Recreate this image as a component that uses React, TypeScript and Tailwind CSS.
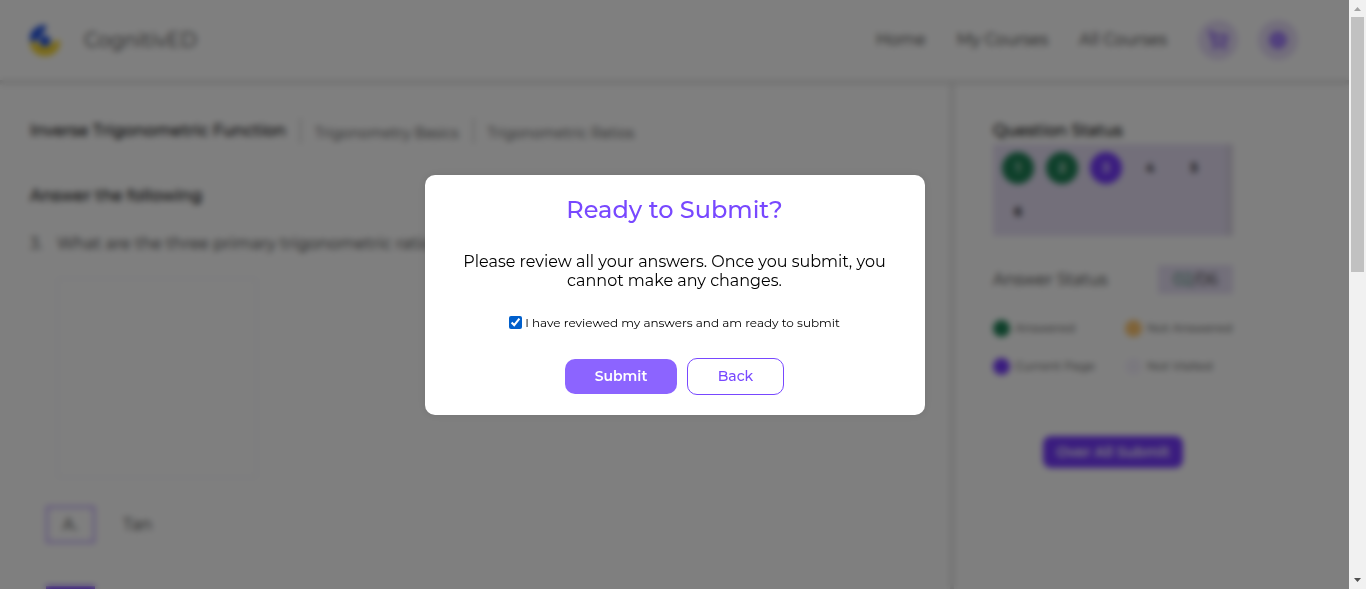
import React, { useState } from "react";
import { ShoppingCart, CircleUserRound } from "lucide-react";

type Status = "answered" | "current" | "unvisited";

const questions: { id: number; status: Status }[] = [
  { id: 1, status: "answered" },
  { id: 2, status: "answered" },
  { id: 3, status: "current" },
  { id: 4, status: "unvisited" },
  { id: 5, status: "unvisited" },
  { id: 6, status: "unvisited" },
];

const questionStyles: Record<Status, string> = {
  answered: "bg-[#1d8055] text-white",
  current: "bg-[#7539ff] text-white",
  unvisited: "text-black",
};

const legend = [
  { label: "Answered", dot: "bg-[#1d8055]" },
  { label: "Not Answered", dot: "bg-[#ffc670]" },
  { label: "Current Page", dot: "bg-[#7539ff]" },
  { label: "Not Visited", dot: "bg-[#f5f1fd]" },
];

function Logo() {
  return (
    <svg viewBox="0 0 32 34" className="h-[34px] w-8" aria-hidden="true">
      <path d="M1 19a15 14 0 0 0 30 0c0-2-5-2-7 0-2 4-5 5-8 5s-6-2-8-5Z" fill="#f5d327" />
      <path d="M1 18C0 9 6 3 15 2c3 0 3 2 1 5l-6 8c-2 3-5 4-9 3Z" fill="#1d4fe0" />
      <circle cx="16" cy="18" r="5.5" fill="#1d4fe0" />
    </svg>
  );
}

function Header() {
  return (
    <header className="flex h-20 shrink-0 items-center justify-between pr-[51px] pl-[29px] shadow-[0_2px_3px_2px_rgba(0,0,0,0.13)]">
      <a href="#home" className="flex items-center gap-[23px] text-xl text-[#444]">
        <Logo />
        CognitivED
      </a>
      <nav className="flex items-center gap-[31px] text-base text-[#333]">
        <a href="#home">Home</a>
        <a href="#my-courses">My Courses</a>
        <a href="#all-courses">All Courses</a>
        <div className="flex gap-5">
          <button aria-label="Cart" className="flex size-10 items-center justify-center rounded-full bg-[#e6dcf8] text-[#8657f5]">
            <ShoppingCart size={20} strokeWidth={3} />
          </button>
          <button aria-label="Profile" className="flex size-10 items-center justify-center rounded-full bg-[#e6dcf8] text-[#8f66f5]">
            <CircleUserRound size={18} strokeWidth={3} fill="#a683ff" />
          </button>
        </div>
      </nav>
    </header>
  );
}

function Question() {
  return (
    <main className="min-w-0 px-[30px] pt-[38px]">
      <div className="flex h-[26px] items-center gap-3.5 text-sm text-[#444]">
        <h1 className="text-base font-medium text-black">Inverse Trigonometric Function</h1>
        <span className="h-full w-px bg-[#aaa]" />
        <a href="#basics" className="pt-1">Trigonometry Basics</a>
        <span className="h-full w-px bg-[#aaa]" />
        <a href="#ratios" className="pt-1">Trigonometric Ratios</a>
      </div>
      <h2 className="mt-10 text-base font-medium text-black">Answer the following</h2>
      <div className="mt-6 flex text-base text-[#333]">
        <span className="w-[27px]">3.</span>
        <p>What are the three primary trigonometric ratios?</p>
      </div>
      <div className="mt-[22px] ml-[27px] size-[200px] border border-[#ececf4]" />
      <div className="mt-7 ml-4 flex items-center gap-7 text-base text-[#333]">
        <button className="flex h-[37px] w-[49px] items-center justify-center border-2 border-[#b494ff]">A.</button>
        <span>Tan</span>
      </div>
      <button aria-label="Option B" className="mt-[43px] ml-4 block h-[37px] w-[49px] bg-[#7539ff]" />
    </main>
  );
}

function StatusPanel() {
  return (
    <aside className="min-w-0 border-l-4 border-[#e2e2e2] pt-9 pl-[39px]">
      <div className="w-60">
        <h2 className="pt-0.5 text-base leading-[26px] font-medium text-black">Question Status</h2>
        <div className="flex bg-[#e6dff5]">
          <div className="flex flex-1 flex-wrap gap-3 py-2 pl-[9px]">
            {questions.map((q) => (
              <button
                key={q.id}
                className={`flex size-8 items-center justify-center rounded-full text-xs font-semibold ${questionStyles[q.status]}`}
              >
                {q.id}
              </button>
            ))}
          </div>
          <span className="w-[7px] bg-[#dcd6e6]" />
        </div>
        <div className="mt-[29px] flex items-center justify-between text-base text-[#333]">
          <h2>Answer Status</h2>
          <span className="flex h-[29px] w-[75px] items-center justify-center bg-[#e6dff5]">
            <span className="text-[#1d8055]">02</span>/06
          </span>
        </div>
        <ul className="mt-[25px] grid grid-cols-[132px_1fr] gap-y-5 text-xs text-[#444]">
          {legend.map((item) => (
            <li key={item.label} className="flex h-[18px] items-center gap-[5px] whitespace-nowrap">
              <span className={`size-[17px] shrink-0 rounded-full ${item.dot}`} />
              {item.label}
            </li>
          ))}
        </ul>
        <button className="mx-auto mt-[61px] block h-8 w-[140px] rounded-lg bg-[#7539ff] text-sm font-semibold text-white">
          Over All Submit
        </button>
      </div>
    </aside>
  );
}

function SubmitDialog() {
  const [reviewed, setReviewed] = useState(true);
  return (
    <div className="absolute inset-0 flex items-center justify-center bg-black/50 backdrop-blur-[3px]">
      <div
        role="dialog"
        aria-modal="true"
        aria-labelledby="submit-title"
        className="flex w-full max-w-[500px] flex-col items-center rounded-[10px] bg-white p-5 text-center text-black shadow-[0_0_10px_rgba(0,0,0,0.1)]"
      >
        <h2 id="submit-title" className="text-2xl leading-[30px] font-medium text-[#7848ff]">
          Ready to Submit?
        </h2>
        <p className="mt-[27px] px-4 text-base leading-[19px]">
          Please review all your answers. Once you submit, you cannot make any changes.
        </p>
        <label className="mt-[25px] flex items-center gap-[3px] text-xs leading-[15px]">
          <input
            type="checkbox"
            checked={reviewed}
            onChange={(e) => setReviewed(e.target.checked)}
            className="size-[13px] accent-[#005fcc]"
          />
          I have reviewed my answers and am ready to submit
        </label>
        <div className="mt-7 flex items-center gap-2.5 text-sm">
          <button className="h-[35px] w-28 rounded-[10px] bg-[#8c64ff] font-semibold text-white">Submit</button>
          <button className="h-[37px] w-[97px] rounded-[10px] border border-[#7848ff] font-medium text-[#7848ff]">
            Back
          </button>
        </div>
      </div>
    </div>
  );
}

function ScrollRail() {
  return (
    <div className="flex w-[17px] shrink-0 flex-col items-center bg-[#f1f1f1]" aria-hidden="true">
      <svg viewBox="0 0 17 17" className="size-[17px] shrink-0">
        <path d="M5 11h7L8.5 7Z" fill="#a3a3a3" />
      </svg>
      <div className="h-[255px] w-[13px] bg-[#c1c1c1]" />
      <svg viewBox="0 0 17 17" className="mt-auto size-[17px] shrink-0">
        <path d="M5 6h7L8.5 10Z" fill="#505050" />
      </svg>
    </div>
  );
}

export default function App() {
  return (
    <div className="flex h-screen overflow-hidden bg-white font-[Montserrat,Inter,sans-serif]">
      <div className="relative flex min-w-0 flex-1 flex-col overflow-hidden">
        <Header />
        <div className="grid min-h-0 flex-1 grid-cols-[950fr_399fr]">
          <Question />
          <StatusPanel />
        </div>
        <SubmitDialog />
      </div>
      <ScrollRail />
    </div>
  );
}
